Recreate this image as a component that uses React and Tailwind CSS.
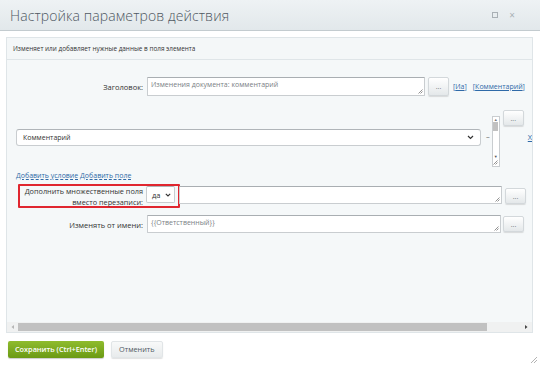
import React from "react";

const Grip = () => (
  <svg width="6" height="6" viewBox="0 0 6 6" className="absolute right-[1px] bottom-[1px]">
    <path d="M5.5 1.5L1.5 5.5M5.5 3.5L3.5 5.5" stroke="#777" strokeWidth="0.8" />
  </svg>
);

const Field = ({ className, children }) => (
  <div
    className={
      "relative shrink-0 bg-white border border-[#c9cdd0] border-t-[#a9aeb2] rounded-[1px] pl-[3px] pt-[2px] text-[7px] leading-[10px] text-[#7a8085] whitespace-nowrap " +
      className
    }
  >
    {children}
    <Grip />
  </div>
);

const Dots = ({ className }) => (
  <div
    className={
      "shrink-0 flex items-center justify-center rounded-[2px] border border-[#d3d8db] bg-gradient-to-b from-white to-[#e4e8ea] text-[7px] leading-none text-[#6b7378] shadow-[0_1px_1px_rgba(0,0,0,0.12)] " +
      className
    }
  >
    ...
  </div>
);

export default function App() {
  return (
    <div
      className="w-[540px] h-[367px] bg-white flex flex-col relative overflow-hidden"
      style={{ fontFamily: '"Open Sans", "Liberation Sans", sans-serif' }}
    >
      {/* Title bar */}
      <div className="h-[31px] shrink-0 flex items-center justify-between bg-gradient-to-b from-[#eef2f4] to-[#e2e8eb] border-b border-[#c3cbcf] pl-[10px] pr-[25px]">
        <div className="text-[14px] font-light text-[#4f5862] tracking-[0.1px]">Настройка параметров действия</div>
        <div className="flex items-center gap-[11px] text-[#a9b0b5]">
          <div className="w-[6px] h-[6px] border border-[#a9b0b5]" />
          <div className="text-[10px] leading-none">×</div>
        </div>
      </div>

      {/* Panel */}
      <div className="mt-[6px] mx-[6px] w-[527px] h-[296px] border border-[#dfe5e8] bg-[#f5f8f9] flex flex-col overflow-hidden">
        <div className="h-[22px] shrink-0 border-b border-[#dfe5e8] bg-[#f4f7f8] pl-[6px] pt-[1px] flex items-center text-[6.4px] text-[#333]">
          Изменяет или добавляет нужные данные в поля элемента
        </div>

        <div className="flex-1 flex flex-col overflow-hidden text-[7.5px] text-[#333] leading-[10px]">
          {/* Row 1 */}
          <div className="flex items-start mt-[17px]">
            <div className="w-[140px] shrink-0 pr-[4px] text-right pt-[5px]">Заголовок:</div>
            <Field className="w-[278px] h-[19px]">Изменения документа: комментарий</Field>
            <Dots className="ml-[3px] w-[21px] h-[19px]" />
            <span className="ml-[4px] mt-[5px] text-[7px] text-[#2f6aa8] whitespace-nowrap">
              [<span className="underline">Иа</span>]
            </span>
            <span className="ml-[6px] mt-[5px] text-[7px] text-[#2f6aa8] whitespace-nowrap">
              [<span className="underline">Комментарий</span>]
            </span>
          </div>

          {/* Row 2 */}
          <div className="flex items-start mt-[14px] pl-[9px]">
            <div className="mt-[19px] w-[465px] h-[17px] shrink-0 bg-white border border-[#c9cdd0] border-t-[#b0b5b9] rounded-[3px] flex items-center justify-between pl-[6px] pr-[6px]">
              <span className="text-[7px]">Комментарий</span>
              <svg width="7" height="5" viewBox="0 0 7 5">
                <path d="M1 1L3.5 3.5L6 1" stroke="#333" strokeWidth="1.2" fill="none" />
              </svg>
            </div>
            <div className="ml-[5px] mt-[21px] text-[#666]">–</div>
            <div className="ml-[2px] mt-[6px] w-[8px] h-[51px] shrink-0 bg-white border border-[#c9cdd0] relative flex flex-col items-center">
              <div className="text-[4px] leading-[5px] text-[#777]">▲</div>
              <div className="w-[5px] h-[9px] bg-[#c1c1c1]" />
              <div className="flex-1" />
              <div className="text-[4px] leading-[5px] text-[#555] mb-[7px]">▼</div>
              <Grip />
            </div>
            <Dots className="ml-[3px] w-[21px] h-[16px]" />
            <div className="ml-[4px] mt-[22px] text-[#2f6aa8] underline">Х</div>
          </div>

          {/* Row 3 links */}
          <div className="mt-[4px] pl-[9px] text-[7px] text-[#2f6aa8] whitespace-nowrap">
            <span className="underline decoration-dashed">Добавить условие</span>{" "}
            <span className="underline decoration-dashed">Добавить поле</span>
          </div>

          {/* Row 4 highlighted */}
          <div className="flex items-start mt-[3px]">
            <div className="ml-[11px] w-[162px] h-[24px] shrink-0 border-2 border-[#e0262f] rounded-[1px] flex items-start">
              <div className="w-[126px] shrink-0 pr-[3px] text-right leading-[11px] text-[7.3px] text-[#333]">
                Дополнить множественные поля
                <br />
                вместо перезаписи:
              </div>
              <div className="w-[29px] h-[17px] shrink-0 bg-white border border-[#c9cdd0] border-t-[#b0b5b9] rounded-[2px] flex items-center justify-between pl-[5px] pr-[3px]">
                <span>да</span>
                <svg width="6" height="4" viewBox="0 0 6 4">
                  <path d="M0.8 0.8L3 3L5.2 0.8" stroke="#333" strokeWidth="1.1" fill="none" />
                </svg>
              </div>
            </div>
            <Field className="mt-[2px] -ml-[1px] w-[323px] h-[18px]" />
            <Dots className="ml-[3px] mt-[4px] w-[21px] h-[16px]" />
          </div>

          {/* Row 5 */}
          <div className="flex items-start mt-[7px]">
            <div className="w-[140px] shrink-0 pr-[4px] text-right pt-[5px]">Изменять от имени:</div>
            <Field className="w-[354px] h-[18px]">{"{{Ответственный}}"}</Field>
            <Dots className="ml-[2px] mt-[1px] w-[21px] h-[16px]" />
          </div>

          <div className="flex-1" />

          {/* Horizontal scrollbar */}
          <div className="h-[10px] shrink-0 bg-[#f0f1f1] flex items-center">
            <svg width="8" height="8" viewBox="0 0 8 8" className="ml-[2px]">
              <path d="M5 2L2.5 4L5 6Z" fill="#b5b5b5" />
            </svg>
            <div className="ml-[1px] w-[469px] h-[8px] bg-[#c1c1c1]" />
            <div className="flex-1" />
            <svg width="8" height="8" viewBox="0 0 8 8" className="mr-[2px]">
              <path d="M3 2L5.5 4L3 6Z" fill="#444" />
            </svg>
          </div>
        </div>
      </div>

      {/* Buttons */}
      <div className="flex items-start mt-[8px] pl-[8px] gap-[7px]">
        <div className="h-[17px] px-[7px] flex items-center rounded-[2px] bg-gradient-to-b from-[#8fbc2d] to-[#6b9a13] text-white text-[7.3px] font-semibold shadow-[0_1px_1px_rgba(0,0,0,0.2)]">
          Сохранить (Ctrl+Enter)
        </div>
        <div className="h-[17px] px-[7px] flex items-center rounded-[2px] bg-gradient-to-b from-[#f8f9f9] to-[#e8ebec] border border-[#e1e5e7] text-[#4f5862] text-[7.3px] shadow-[0_1px_1px_rgba(0,0,0,0.12)]">
          Отменить
        </div>
      </div>

      {/* Window resize grip */}
      <svg width="9" height="9" viewBox="0 0 9 9" className="absolute right-[2px] bottom-[3px]">
        <path d="M8 2L2 8M8 5L5 8" stroke="#a0a0a0" strokeWidth="0.8" />
      </svg>
    </div>
  );
}
